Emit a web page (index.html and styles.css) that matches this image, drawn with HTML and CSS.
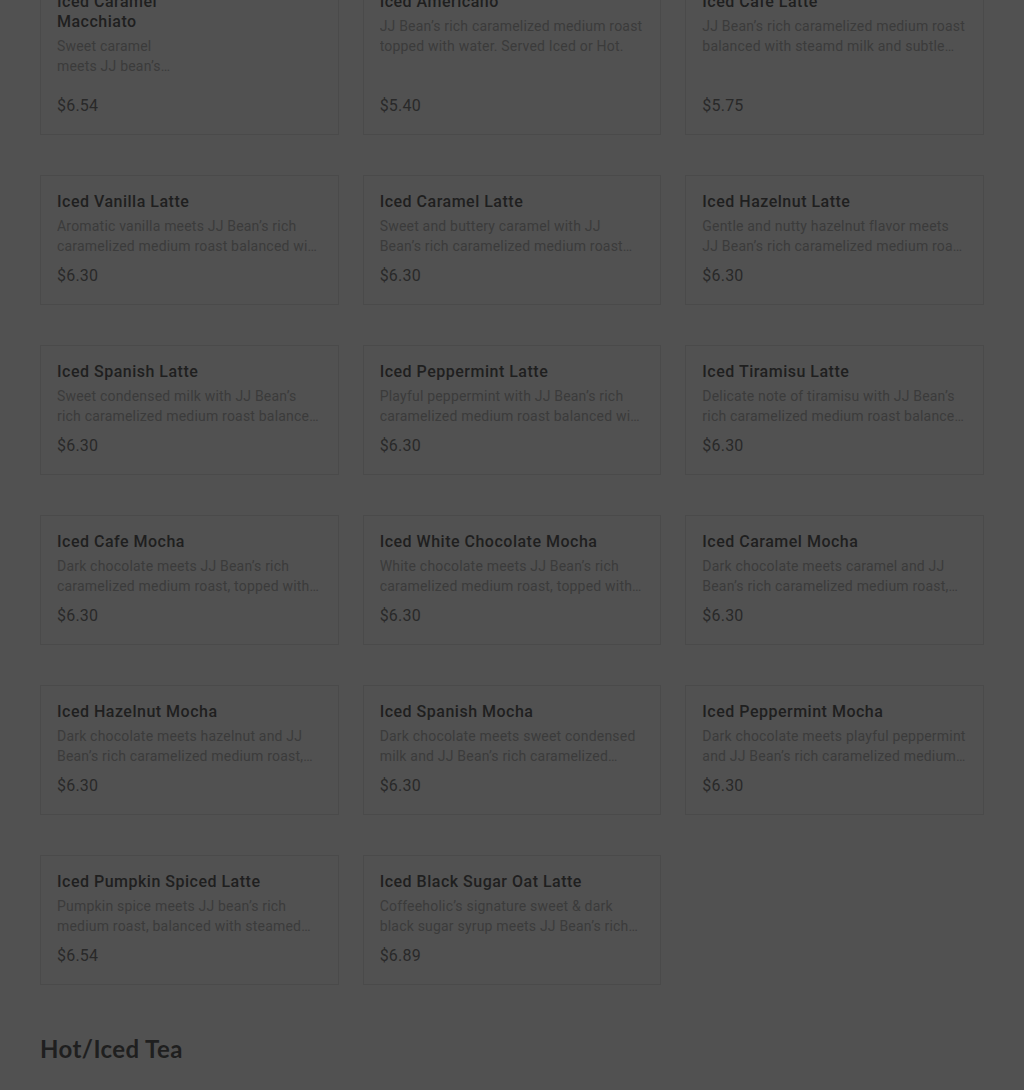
FILE: index.html
```html
<!DOCTYPE html>
<html lang="en">
<head>
  <meta charset="UTF-8" />
  <meta name="viewport" content="width=device-width, initial-scale=1.0" />
  <title>Menu</title>
  <link rel="stylesheet" href="styles.css">
</head>
<body>
  <main class="menu">
    <!-- Iced coffee -->
    <section class="category">
      <div class="grid">
        <div class="card card-thumbed">
          <div class="card-body">
            <h3 class="item-name">Iced Caramel Macchiato</h3>
            <p class="item-desc">Sweet caramel meets JJ bean’s rich caramelized medium roast and steamed milk.</p>
            <p class="item-price">$6.54</p>
          </div>
          <div class="thumb"></div>
        </div>
        <div class="card">
          <h3 class="item-name">Iced Americano</h3>
          <p class="item-desc">JJ Bean’s rich caramelized medium roast topped with water. Served Iced or Hot.</p>
          <p class="item-price">$5.40</p>
        </div>
        <div class="card">
          <h3 class="item-name">Iced Cafe Latte</h3>
          <p class="item-desc">JJ Bean’s rich caramelized medium roast balanced with steamd milk and subtle foam.</p>
          <p class="item-price">$5.75</p>
        </div>

        <div class="card">
          <h3 class="item-name">Iced Vanilla Latte</h3>
          <p class="item-desc">Aromatic vanilla meets JJ Bean’s rich caramelized medium roast balanced with steamed milk.</p>
          <p class="item-price">$6.30</p>
        </div>
        <div class="card">
          <h3 class="item-name">Iced Caramel Latte</h3>
          <p class="item-desc">Sweet and buttery caramel with JJ Bean’s rich caramelized medium roast balanced with steamed milk.</p>
          <p class="item-price">$6.30</p>
        </div>
        <div class="card">
          <h3 class="item-name">Iced Hazelnut Latte</h3>
          <p class="item-desc">Gentle and nutty hazelnut flavor meets JJ Bean’s rich caramelized medium roast balanced with steamed milk.</p>
          <p class="item-price">$6.30</p>
        </div>

        <div class="card">
          <h3 class="item-name">Iced Spanish Latte</h3>
          <p class="item-desc">Sweet condensed milk with JJ Bean’s rich caramelized medium roast balanced with steamed milk.</p>
          <p class="item-price">$6.30</p>
        </div>
        <div class="card">
          <h3 class="item-name">Iced Peppermint Latte</h3>
          <p class="item-desc">Playful peppermint with JJ Bean’s rich caramelized medium roast balanced with steamed milk.</p>
          <p class="item-price">$6.30</p>
        </div>
        <div class="card">
          <h3 class="item-name">Iced Tiramisu Latte</h3>
          <p class="item-desc">Delicate note of tiramisu with JJ Bean’s rich caramelized medium roast balanced with steamed milk.</p>
          <p class="item-price">$6.30</p>
        </div>

        <div class="card">
          <h3 class="item-name">Iced Cafe Mocha</h3>
          <p class="item-desc">Dark chocolate meets JJ Bean’s rich caramelized medium roast, topped with steamed milk.</p>
          <p class="item-price">$6.30</p>
        </div>
        <div class="card">
          <h3 class="item-name">Iced White Chocolate Mocha</h3>
          <p class="item-desc">White chocolate meets JJ Bean’s rich caramelized medium roast, topped with steamed milk.</p>
          <p class="item-price">$6.30</p>
        </div>
        <div class="card">
          <h3 class="item-name">Iced Caramel Mocha</h3>
          <p class="item-desc">Dark chocolate meets caramel and JJ Bean’s rich caramelized medium roast, topped with steamed milk.</p>
          <p class="item-price">$6.30</p>
        </div>

        <div class="card">
          <h3 class="item-name">Iced Hazelnut Mocha</h3>
          <p class="item-desc">Dark chocolate meets hazelnut and JJ Bean’s rich caramelized medium roast, topped with steamed milk.</p>
          <p class="item-price">$6.30</p>
        </div>
        <div class="card">
          <h3 class="item-name">Iced Spanish Mocha</h3>
          <p class="item-desc">Dark chocolate meets sweet condensed milk and JJ Bean’s rich caramelized medium roast.</p>
          <p class="item-price">$6.30</p>
        </div>
        <div class="card">
          <h3 class="item-name">Iced Peppermint Mocha</h3>
          <p class="item-desc">Dark chocolate meets playful peppermint and JJ Bean’s rich caramelized medium roast.</p>
          <p class="item-price">$6.30</p>
        </div>

        <div class="card">
          <h3 class="item-name">Iced Pumpkin Spiced Latte</h3>
          <p class="item-desc">Pumpkin spice meets JJ bean’s rich medium roast, balanced with steamed milk.</p>
          <p class="item-price">$6.54</p>
        </div>
        <div class="card">
          <h3 class="item-name">Iced Black Sugar Oat Latte</h3>
          <p class="item-desc">Coffeeholic’s signature sweet &amp; dark black sugar syrup meets JJ Bean’s rich caramelized medium roast.</p>
          <p class="item-price">$6.89</p>
        </div>
      </div>
    </section>

    <h2 class="category-title">Hot/Iced Tea</h2>
  </main>
</body>
</html>
```

FILE: styles.css
```css
body {
  margin: 0;
  padding: 0 40px;
  background-color: #515151;
  font-family: Roboto, "Liberation Sans", sans-serif;
}
.menu {
  /* page is scrolled a little past the top of the first row */
  margin-top: -25px;
}
.grid {
  display: grid;
  grid-template-columns: repeat(3, 1fr);
  column-gap: 24px;
  row-gap: 40px;
}
.card {
  display: flex;
  flex-direction: column;
  padding: 16px 16px 18px;
  border: 1px solid #4a4a4a;
}
.card-thumbed {
  flex-direction: row;
  gap: 16px;
}
.card-body {
  display: flex;
  flex-direction: column;
  width: 126px;
}
.thumb {
  width: 122px;
  height: 124px;
  margin-left: auto;
}
.item-name {
  margin: 0;
  font-size: 16px;
  font-weight: 500;
  line-height: 20px;
  letter-spacing: 0.5px;
  color: #1f1f1f;
}
.item-desc {
  margin: 4px 0 0;
  font-size: 14px;
  line-height: 20px;
  letter-spacing: 0.2px;
  color: #3b3b3b;
  display: -webkit-box;
  -webkit-line-clamp: 2;
  -webkit-box-orient: vertical;
  overflow: hidden;
}
.item-price {
  margin: auto 0 0;
  padding-top: 10px;
  font-size: 16px;
  line-height: 20px;
  letter-spacing: 0.2px;
  color: #292929;
}
.category-title {
  margin: 49px 0 0;
  font-family: Lato, "Liberation Sans", sans-serif;
  font-size: 24px;
  font-weight: 700;
  line-height: 30px;
  letter-spacing: 0.4px;
  color: #1f1f1f;
}
```
